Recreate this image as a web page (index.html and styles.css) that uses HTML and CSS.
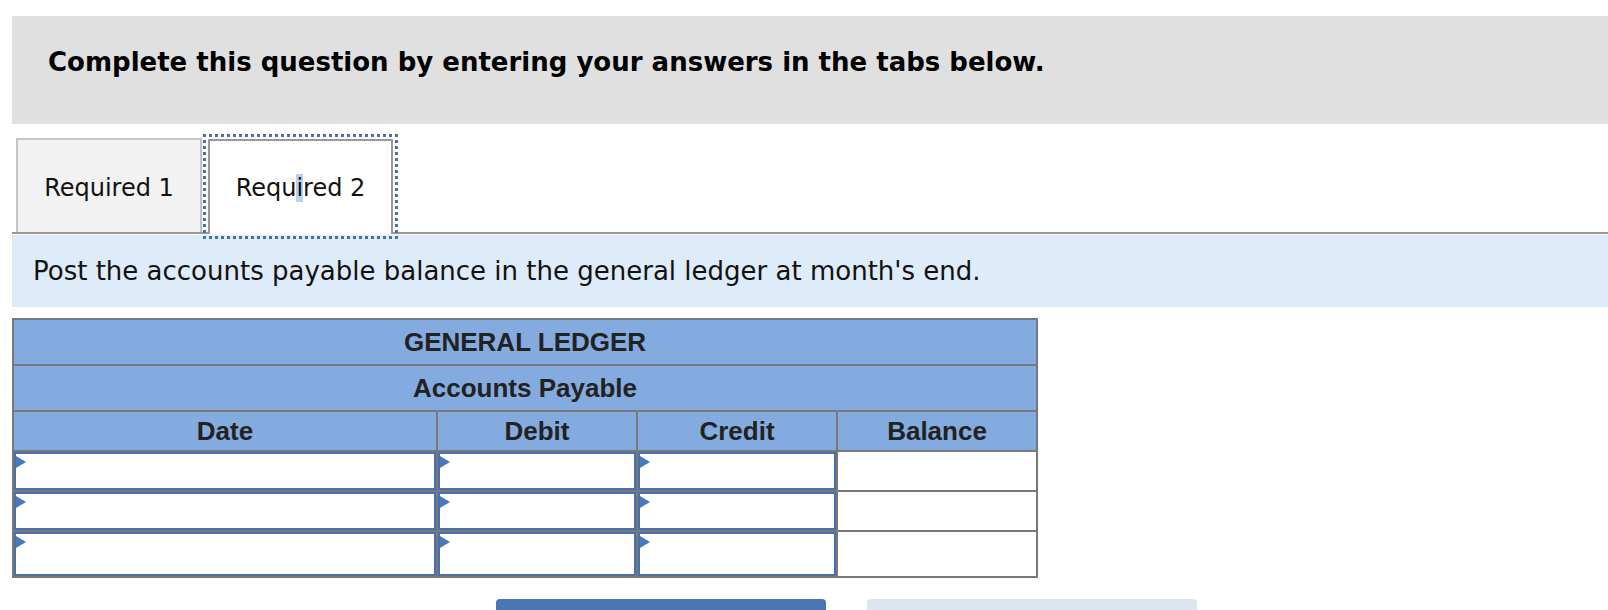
FILE: index.html
```html
<!DOCTYPE html>
<html>
<head>
<title>Required 2</title>
<link rel="stylesheet" href="styles.css">
</head>
<body>

<div class="mainContainer">

<div class="instructions">
<h2>Complete this question by entering your answers in the tabs below.</h2>
</div>

<div class="tabBar">
<div class="tab">Required 1</div>
<div class="tab activeTab">Requ<span class="caret">i</span>red 2</div>
</div>

<div class="prompt">
Post the accounts payable balance in the general ledger at month's end.
</div>

<table class="ledger">
<colgroup>
<col class="dateCol">
<col class="amountCol">
<col class="amountCol">
<col class="amountCol">
</colgroup>
<tr><th colspan="4" class="titleRow">GENERAL LEDGER</th></tr>
<tr><th colspan="4" class="titleRow">Accounts Payable</th></tr>
<tr class="colHeads">
<th>Date</th>
<th>Debit</th>
<th>Credit</th>
<th>Balance</th>
</tr>
<tr class="entryRow">
<td><div class="inputBox"></div></td>
<td><div class="inputBox"></div></td>
<td><div class="inputBox"></div></td>
<td></td>
</tr>
<tr class="entryRow">
<td><div class="inputBox"></div></td>
<td><div class="inputBox"></div></td>
<td><div class="inputBox"></div></td>
<td></td>
</tr>
<tr class="entryRow lastRow">
<td><div class="inputBox"></div></td>
<td><div class="inputBox"></div></td>
<td><div class="inputBox"></div></td>
<td></td>
</tr>
</table>

<div class="navButtons">
<div class="navButton prevButton"></div>
<div class="navButton nextButton"></div>
</div>

</div>

</body>
</html>
```

FILE: styles.css
```css
html, body {
    margin: 0;
    padding: 0;
    overflow: hidden;
    background: #fff;
}
.mainContainer {
    padding: 16px 0 0 12px;
}
.instructions {
    background-color: #e0e0e0;
    height: 108px;
    box-sizing: border-box;
    padding: 31px 0 0 36px;
}
.instructions h2 {
    margin: 0;
    font: bold 26px "DejaVu Sans", Verdana, sans-serif;
    color: #000;
}
.tabBar {
    display: flex;
    gap: 6px;
    margin-top: 14px;
    padding-left: 4px;
    border-bottom: 2px solid #999;
    height: 94px;
}
.tab {
    width: 186px;
    height: 94px;
    box-sizing: border-box;
    display: flex;
    align-items: center;
    justify-content: center;
    padding-top: 4px;
    font: 24px "DejaVu Sans", Verdana, sans-serif;
    color: #111;
    background-color: #f2f2f2;
    border: 2px solid #c4c4c4;
    border-bottom: none;
}
.activeTab {
    width: 185px;
    height: 95px;
    margin-top: 1px;
    padding-top: 0;
    background-color: #fff;
    border-color: #999;
    outline: 3px dotted #4a70ac;
    outline-offset: 2px;
}
.caret {
    background-color: #b9d1f0;
}
.prompt {
    background-color: #deebf8;
    height: 72px;
    padding-left: 21px;
    display: flex;
    align-items: center;
    font: 26px "DejaVu Sans", Verdana, sans-serif;
    color: #111;
    margin-top: 1px;
}
table.ledger {
    margin-top: 11px;
    border-collapse: collapse;
    border: 2px solid #787878;
    width: 1026px;
    table-layout: fixed;
}
col.dateCol {
    width: 424px;
}
col.amountCol {
    width: 200px;
}
table.ledger th {
    background-color: #84abdf;
    border: 2px solid #787878;
    font: bold 26px "Liberation Sans", Arial, sans-serif;
    color: #222;
    text-align: center;
    padding: 0;
}
th.titleRow {
    height: 44px;
}
tr.colHeads th {
    height: 38px;
}
table.ledger td {
    border: 2px solid #787878;
    height: 38px;
    padding: 0;
    background: #fff;
}
tr.lastRow td {
    height: 44px;
}
.inputBox {
    position: relative;
    box-sizing: border-box;
    height: 100%;
    border: 2px solid #4a70ac;
    background: #fff;
}
.inputBox::before {
    content: "";
    position: absolute;
    left: 0;
    top: 2px;
    border-left: 10px solid #4a78bc;
    border-top: 6px solid transparent;
    border-bottom: 6px solid transparent;
}
.navButtons {
    display: flex;
    gap: 41px;
    margin-top: 21px;
    padding-left: 484px;
}
.navButton {
    width: 330px;
    height: 40px;
    border-radius: 4px 4px 0 0;
}
.prevButton {
    background-color: #4a76b2;
}
.nextButton {
    background-color: #dbe4f0;
}
```
